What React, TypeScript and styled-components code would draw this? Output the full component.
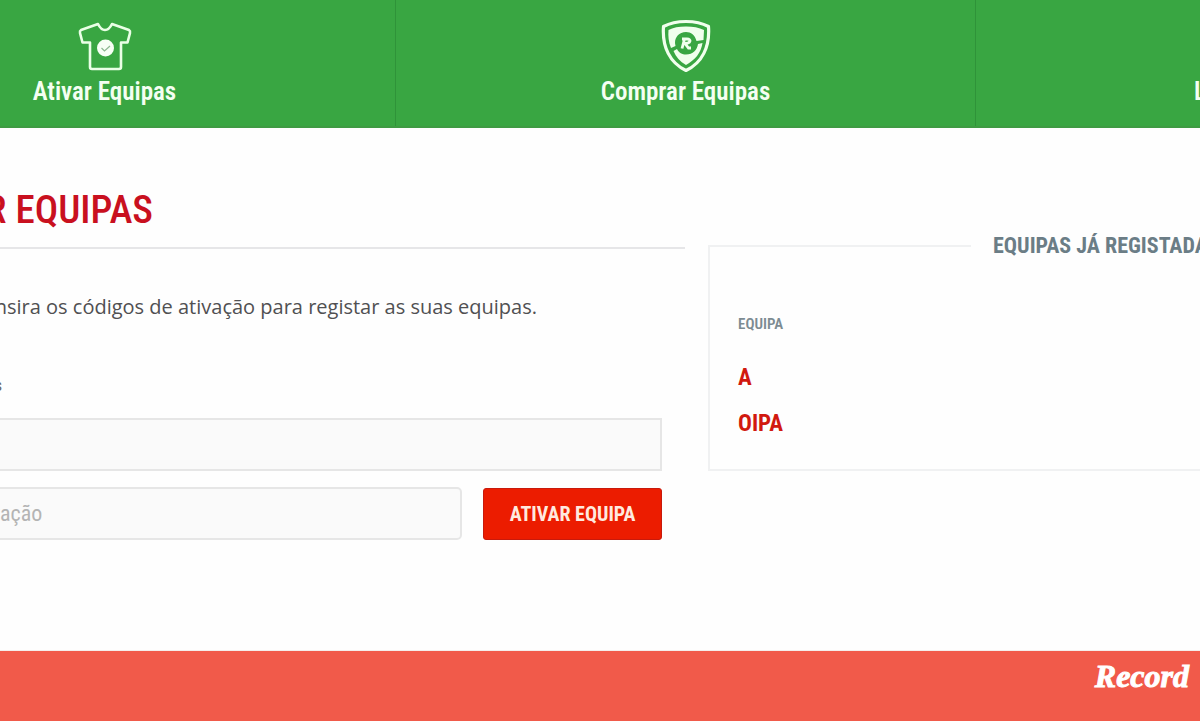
import React from "react";
import styled, { createGlobalStyle } from "styled-components";

const condensed = `"Roboto Condensed", "Liberation Sans Narrow", "Open Sans Condensed", "DejaVu Sans Condensed", sans-serif`;

const GlobalStyle = createGlobalStyle`
  *, *::before, *::after { box-sizing: border-box; }
  body { margin: 0; background: #fefefe; overflow-x: hidden; font-family: ${condensed}; }
  h1, h2, p { margin: 0; font-weight: 400; }
`;

const Page = styled.div`
  min-height: 100vh;
  display: flex;
  flex-direction: column;
  overflow: hidden;
`;

const Nav = styled.nav`
  display: grid;
  grid-template-columns: 1fr 580px 224px;
  height: 128px;
  overflow: hidden;
  background: #39a642;
  border-bottom: 2px solid #3f9b43;
`;

const Tab = styled.a<{ $cut?: "left" | "right" }>`
  display: flex;
  flex-direction: column;
  align-items: ${(p) => (p.$cut === "right" ? "flex-end" : "center")};
  justify-content: flex-end;
  gap: 4px;
  padding: 0 ${(p) => (p.$cut === "left" ? 186 : 0)}px 19px 0;
  border-right: ${(p) => (p.$cut === "right" ? "0" : "1px solid #2f9339")};
  color: #f4fff2;
  font-size: 25px;
  line-height: 30px;
  font-weight: 600;
  text-decoration: none;
  white-space: nowrap;
`;

const Edge = styled.span`
  width: 6px;
  overflow: hidden;
`;

const Main = styled.main`
  flex: 1;
  display: grid;
  grid-template-columns: 685px 1fr;
  column-gap: 23px;
  align-items: start;
  padding-top: 56px;
`;

const Title = styled.h1`
  display: flex;
  align-items: flex-start;
  height: 65px;
  border-bottom: 2px solid #e6e6e8;
  color: #c9101f;
`;

const Tail = styled.span<{ $width: number }>`
  display: flex;
  justify-content: flex-end;
  width: ${(p) => p.$width}px;
  overflow: hidden;
  white-space: nowrap;
`;

const TitleText = styled(Tail)`
  font-size: 39px;
  line-height: 52px;
  font-weight: 500;
`;

const Intro = styled.p`
  padding-top: 43px;
  color: #505052;
  font-family: "Open Sans", sans-serif;
  font-size: 20px;
  line-height: 30px;
`;

const Form = styled.form`
  padding: 52px 23px 0 0;
`;

const FieldLabel = styled.label`
  display: flex;
  color: #666;
  font-size: 16px;
  line-height: 24px;
`;

const Field = styled.input<{ $rounded?: boolean }>`
  flex: 1;
  min-width: 0;
  height: 53px;
  margin-left: -138px;
  padding: 0 12px;
  border: 2px solid #e6e6e6;
  border-radius: ${(p) => (p.$rounded ? 5 : 0)}px;
  background: #fafafa;
  font-family: ${condensed};
  font-size: 22px;
  outline: none;
  &::placeholder { color: #b4b4b4; opacity: 1; }
`;

const Row = styled.div<{ $top: number }>`
  display: flex;
  align-items: flex-end;
  gap: 21px;
  padding-top: ${(p) => p.$top}px;
`;

const Submit = styled.button`
  width: 179px;
  height: 52px;
  border: 1px solid #c81a0c;
  border-radius: 3px;
  background: #ec1c00;
  color: #ffe9df;
  font-family: ${condensed};
  font-size: 20px;
  font-weight: 700;
  white-space: nowrap;
`;

const Panel = styled.fieldset`
  min-width: 0;
  height: 239px;
  margin: 48px 0 0;
  padding: 54px 0 0 28px;
  border: 2px solid #f0f1f2;
  border-right: 0;
`;

const Legend = styled.legend`
  width: 229px;
  margin-left: auto;
  padding-left: 22px;
  overflow: hidden;
  color: #6b7d86;
  font-size: 22px;
  line-height: 28px;
  font-weight: 700;
  white-space: nowrap;
`;

const Teams = styled.table`
  border-collapse: collapse;
  text-align: left;
  th { padding: 0 0 21px; color: #7c8b92; font-size: 15px; line-height: 20px; font-weight: 600; }
  td { height: 46px; padding: 0; color: #d1190f; font-size: 23px; line-height: 26px; font-weight: 700; }
`;

const Footer = styled.footer`
  display: flex;
  justify-content: flex-end;
  height: 71px;
  padding: 7px 11px 0 0;
  border-top: 1px solid #f4eeeb;
  background: #f15a4a;
  color: #fff;
  font-family: "Liberation Serif", serif;
  font-size: 32px;
  line-height: 36px;
  font-weight: 700;
  font-style: italic;
  -webkit-text-stroke: 1px #fff;
`;

const ShirtIcon = () => (
  <svg width="54" height="52" viewBox="0 0 54 52" fill="none" aria-hidden="true">
    <path d="M20 3 L3 9 Q1.5 10 2 12 L4.5 21.5 H12 V46 Q12 48 14 48 H41 Q43 48 43 46 V21.5 H49.5 L52 12 Q52.500 10 51 9 L34 3 Q31 9 27 9 Q23 9 20 3 Z" stroke="#eaffe6" strokeWidth="2.600" strokeLinejoin="round" />
    <circle cx="27.500" cy="27" r="8.500" fill="#f7fff5" />
    <path d="M23.500 27 L26.500 30 L32 25" stroke="#8db790" strokeWidth="1.200" />
  </svg>
);

const ShieldIcon = () => (
  <svg width="50" height="54" viewBox="0 0 50 54" fill="none" aria-hidden="true">
    <path d="M25 2.500 C33 2.500 41 4 47.500 7.500 C49 28 41 44 25 51.500 C9 44 1 28 2.500 7.500 C9 4 17 2.500 25 2.500 Z" stroke="#f1ffed" strokeWidth="3.200" strokeLinejoin="round" />
    <path d="M25 7.500 C32 7.500 38 8.500 43 11 L42.500 21 L35.500 22 C34 16 30 13 25 13 C18 13 14 18 14 24 L14.500 27 L10 29 C7.500 23 7 17 7.500 11 C12 8.500 18 7.500 25 7.500 Z" fill="#f1ffed" />
    <path d="M37 25 L41.500 24 C40 34 34 41 25 46 C19 42.500 15 38 12.500 32 L16 30 C18 34 21 35.500 25 35.500 C32 35.500 36 31 37 25 Z" fill="#f1ffed" />
    <path d="M21 29.500 L23.500 20 M21 20 H26 C31 20 29.500 24.500 24 24.500 L27.500 29 H30" stroke="#f1ffed" strokeWidth="2.800" />
  </svg>
);

export default function App() {
  return (
    <Page>
      <GlobalStyle />
      <Nav>
        <Tab href="#ativar" $cut="left">
          <ShirtIcon />
          Ativar Equipas
        </Tab>
        <Tab href="#comprar">
          <ShieldIcon />
          Comprar Equipas
        </Tab>
        <Tab href="#l" $cut="right">
          <Edge>L</Edge>
        </Tab>
      </Nav>
      <Main>
        <section>
          <Title>
            <TitleText $width={153}>ATIVAR EQUIPAS</TitleText>
          </Title>
          <Intro>
            <Tail $width={537}>Insira os códigos de ativação para registar as suas equipas.</Tail>
          </Intro>
          <Form onSubmit={(e) => e.preventDefault()}>
            <FieldLabel htmlFor="team">
              <Tail $width={2}>Equipas</Tail>
            </FieldLabel>
            <Row $top={20}>
              <Field id="team" type="text" />
            </Row>
            <Row $top={16}>
              <Field $rounded type="text" placeholder="Código de ativação" aria-label="Código de ativação" />
              <Submit type="submit">ATIVAR EQUIPA</Submit>
            </Row>
          </Form>
        </section>
        <Panel>
          <Legend>EQUIPAS JÁ REGISTADAS</Legend>
          <Teams>
            <thead>
              <tr><th scope="col">EQUIPA</th></tr>
            </thead>
            <tbody>
              <tr><td>A</td></tr>
              <tr><td>OIPA</td></tr>
            </tbody>
          </Teams>
        </Panel>
      </Main>
      <Footer>Record</Footer>
    </Page>
  );
}
